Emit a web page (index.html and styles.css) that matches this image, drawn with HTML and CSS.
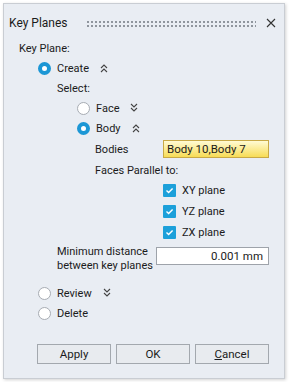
FILE: index.html
```html
<!DOCTYPE html>
<html lang="en">
<head>
  <meta charset="UTF-8" />
  <title>Key Planes</title>
  <link rel="stylesheet" href="styles.css">
</head>
<body>
  <div class="panel">
    <div class="titlebar">
      <span class="title">Key Planes</span>
      <span class="grip"></span>
      <span class="close">
        <svg width="10" height="10" viewBox="0 0 10 10"><path d="M1 1L9 9M9 1L1 9" stroke="#333" stroke-width="1.1" fill="none"/></svg>
      </span>
    </div>

    <div class="row lvl0">Key Plane:</div>

    <div class="row lvl1">
      <span class="radio on"></span><span class="label">Create</span>
      <svg class="chev" width="10" height="10" viewBox="0 0 10 10"><path d="M2 5L5 2L8 5M2 9L5 6L8 9" stroke="#444" stroke-width="1.1" fill="none"/></svg>
    </div>
    <div class="row lvl2">Select:</div>

    <div class="row lvl3">
      <span class="radio"></span><span class="label">Face</span>
      <svg class="chev" width="10" height="10" viewBox="0 0 10 10"><path d="M2 1L5 4L8 1M2 5L5 8L8 5" stroke="#444" stroke-width="1.1" fill="none"/></svg>
    </div>
    <div class="row lvl3">
      <span class="radio on"></span><span class="label">Body</span>
      <svg class="chev" width="10" height="10" viewBox="0 0 10 10"><path d="M2 5L5 2L8 5M2 9L5 6L8 9" stroke="#444" stroke-width="1.1" fill="none"/></svg>
    </div>

    <div class="row lvl4 tall">
      <span class="field-label">Bodies</span>
      <span class="pick">Body 10,Body 7</span>
    </div>
    <div class="row lvl4">Faces Parallel to:</div>

    <div class="row check-row"><span class="check"><svg width="9" height="9" viewBox="0 0 9 9"><path d="M1.5 4.6L3.6 6.6L7.6 2.4" stroke="#fff" stroke-width="1.4" fill="none"/></svg></span>XY plane</div>
    <div class="row check-row"><span class="check"><svg width="9" height="9" viewBox="0 0 9 9"><path d="M1.5 4.6L3.6 6.6L7.6 2.4" stroke="#fff" stroke-width="1.4" fill="none"/></svg></span>YZ plane</div>
    <div class="row check-row"><span class="check"><svg width="9" height="9" viewBox="0 0 9 9"><path d="M1.5 4.6L3.6 6.6L7.6 2.4" stroke="#fff" stroke-width="1.4" fill="none"/></svg></span>ZX plane</div>

    <div class="row lvl2 dist">
      <span class="dist-label">Minimum distance<br>between key planes</span>
      <span class="num">0.001 mm</span>
    </div>

    <div class="row lvl1 review">
      <span class="radio"></span><span class="label">Review</span>
      <svg class="chev" width="10" height="10" viewBox="0 0 10 10"><path d="M2 1L5 4L8 1M2 5L5 8L8 5" stroke="#444" stroke-width="1.1" fill="none"/></svg>
    </div>
    <div class="row lvl1">
      <span class="radio"></span><span class="label">Delete</span>
    </div>

    <div class="buttons">
      <button class="btn">Apply</button>
      <button class="btn">OK</button>
      <button class="btn"><u>C</u>ancel</button>
    </div>
  </div>
</body>
</html>
```

FILE: styles.css
```css
* { margin: 0; padding: 0; box-sizing: border-box; }

body {
  background: #fff;
  font-family: Roboto, 'Liberation Sans', sans-serif;
  font-size: 11px;
  color: #1b1b1b;
}

.panel {
  margin: 3px;
  width: 282px;
  height: 376px;
  background: #e9edf3;
  border: 1px solid #c9cdd3;
  box-shadow: 1px 1px 3px rgba(0, 0, 0, 0.18);
  display: flex;
  flex-direction: column;
}

.titlebar {
  height: 34px;
  padding: 4px 0 0 5px;
  display: flex;
  align-items: center;
}

.title {
  font-size: 12px;
  width: 77px;
}

.grip {
  width: 170px;
  height: 7px;
  background-image: radial-gradient(circle, #8d939b 0.7px, transparent 1.1px);
  background-size: 4px 4px;
  background-position: 0 0;
}

.close {
  margin-left: 10px;
  display: flex;
}

.row {
  height: 20px;
  display: flex;
  align-items: center;
  white-space: nowrap;
}

.lvl0 { padding-left: 15px; }
.lvl1 { padding-left: 34px; }
.lvl2 { padding-left: 53px; }
.lvl3 { padding-left: 73px; }
.lvl4 { padding-left: 91px; }

.tall { height: 22px; }

.radio {
  width: 13px;
  height: 13px;
  border-radius: 50%;
  background: #fff;
  border: 1px solid #a7acb3;
  margin-right: 6px;
  flex-shrink: 0;
}

.radio.on {
  background: #fff;
  border: 4px solid #1c97d5;
}

.chev { margin-left: 10px; }

.field-label { width: 68px; }

.pick {
  width: 106px;
  height: 18px;
  padding-left: 3px;
  display: flex;
  align-items: center;
  background: linear-gradient(to bottom, #fffbd4, #f7dc55);
  border: 1px solid #c8a945;
  font-size: 11.5px;
}

.check-row {
  padding-left: 159px;
  height: 21px;
}

.check {
  width: 13px;
  height: 13px;
  background: #1ca0da;
  border-radius: 1px;
  margin-right: 6px;
  display: flex;
  align-items: center;
  justify-content: center;
}

.dist { height: 32px; }

.dist-label {
  width: 99px;
  line-height: 14px;
}

.num {
  width: 113px;
  height: 18px;
  background: #fff;
  border: 1px solid #9ea3aa;
  text-align: right;
  padding-right: 5px;
  line-height: 16px;
  font-size: 11.5px;
  margin-top: -7px;
}

.review { margin-top: 8px; }

.buttons {
  margin-top: auto;
  padding: 0 0 14px 33px;
  display: flex;
  gap: 5px;
}

.btn {
  width: 74px;
  height: 20px;
  background: #e8ebef;
  border: 1px solid #a3a8ae;
  font-family: inherit;
  font-size: 11.5px;
  color: #1b1b1b;
}
```
